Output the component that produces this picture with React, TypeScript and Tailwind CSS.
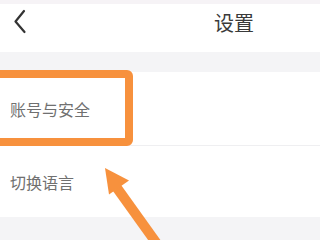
import React from "react";

export default function App() {
  return (
    <div
      className="relative w-[320px] h-[240px] overflow-hidden bg-[#f4f4f6]"
      style={{ fontFamily: '"Noto Sans CJK SC", "Noto Sans", sans-serif' }}
    >
      <div className="h-[4px] bg-[#f6f3f6]" />
      <div className="relative h-[48px] bg-white">
        <svg className="absolute left-[0px] top-[-4px]" width="40" height="48" viewBox="0 0 40 48">
          <polyline points="24,11 15.5,21.5 24.5,32" fill="none" stroke="#333" strokeWidth="2.2" strokeLinecap="round" strokeLinejoin="round" />
        </svg>
        <div className="h-[38px] flex items-center">
          <div className="ml-[214px] text-[20px] leading-none text-[#3a3a3a] font-normal">设置</div>
        </div>
      </div>
      <div className="h-[20px]" />
      <div className="bg-white">
        <div className="h-[73px] flex items-center pl-[10px] border-b border-[#efeff1] box-content">
          <span className="text-[16px] leading-none text-[#707070]">账号与安全</span>
        </div>
        <div className="h-[71px] flex items-center pl-[10px]">
          <span className="text-[16px] leading-none text-[#707070]">切换语言</span>
        </div>
      </div>
      <div className="absolute left-[-10px] top-[70px] w-[143px] h-[76px] border-[8px] border-[#f7913d] rounded-[6px]" />
      <svg className="absolute left-0 top-0" width="320" height="240" viewBox="0 0 320 240">
        <line x1="160" y1="248" x2="117" y2="188" stroke="#f7913d" strokeWidth="10" />
        <polygon points="105,168 129,180.5 109,194.5" fill="#f7913d" />
      </svg>
    </div>
  );
}
